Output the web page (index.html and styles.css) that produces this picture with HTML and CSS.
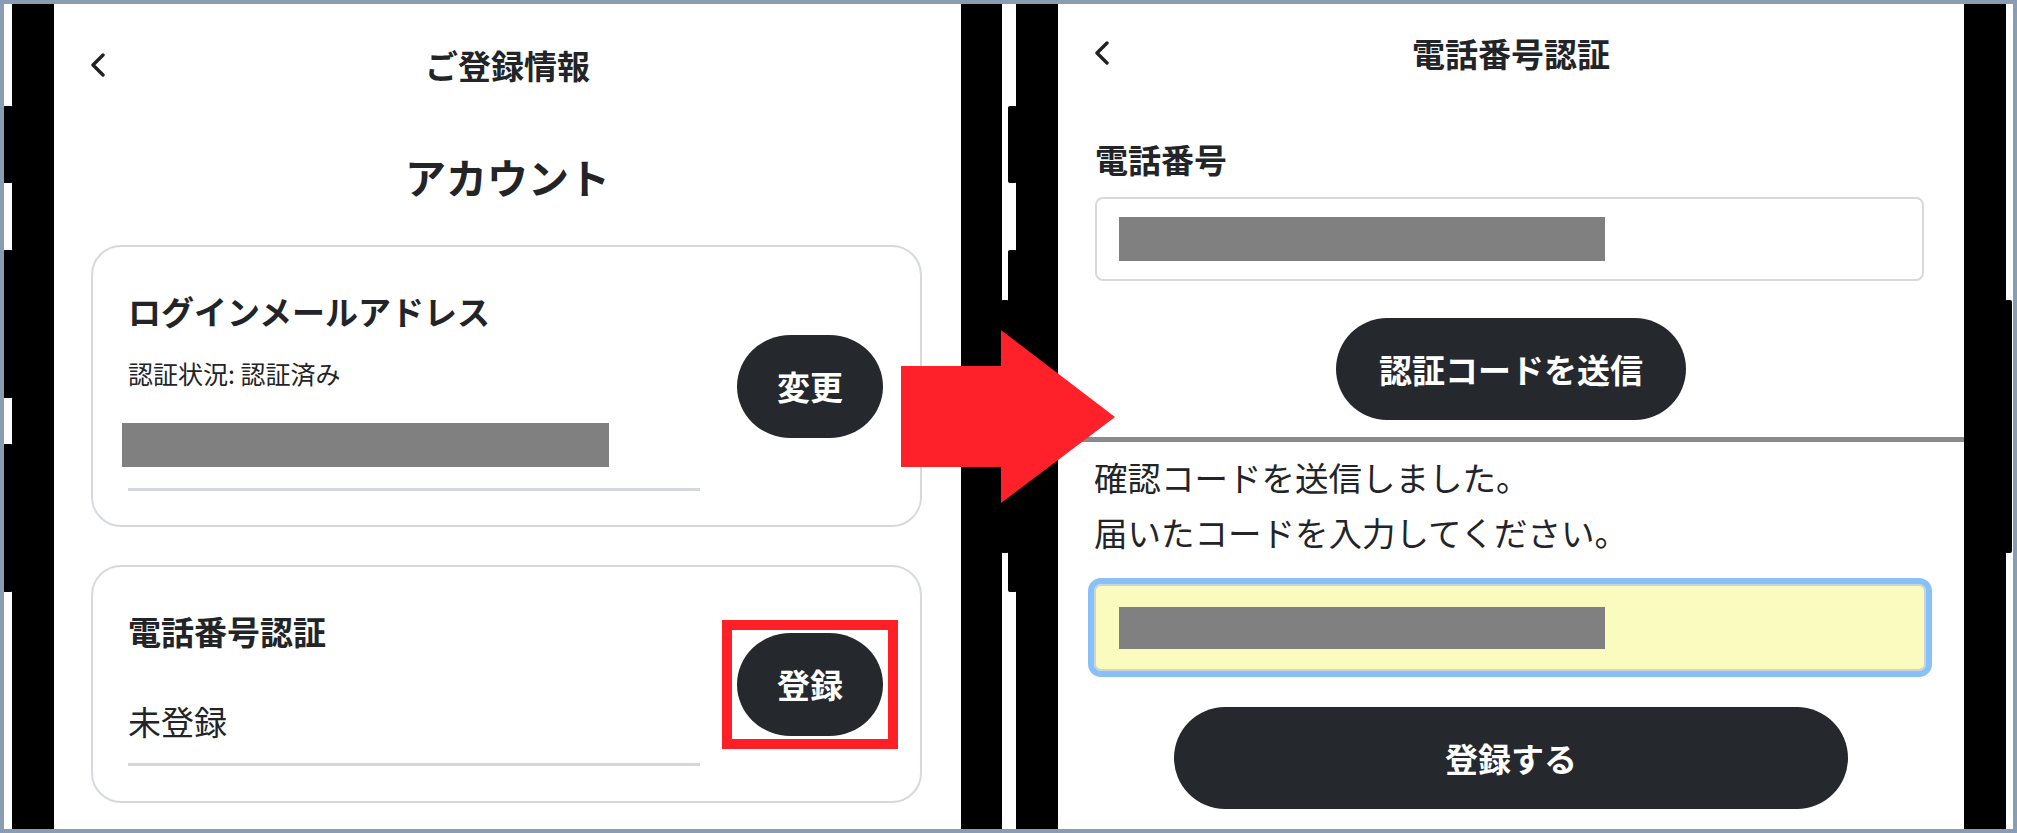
FILE: index.html
```html
<!DOCTYPE html>
<html lang="ja">
<head>
<meta charset="utf-8">
<title>ご登録情報 → 電話番号認証</title>
<link rel="stylesheet" href="styles.css">
</head>
<body>
<div class="frame">
  <div class="phone phone-left">
    <span class="side side-l1"></span>
    <span class="side side-l2"></span>
    <span class="side side-l3"></span>
    <span class="side side-r1"></span>
    <div class="screen">
      <div class="header header-tall">
        <svg class="chev" viewBox="0 0 16 24" width="16" height="24"><polyline points="13,2 3,12 13,22" fill="none" stroke="#222" stroke-width="3.4" stroke-linecap="round" stroke-linejoin="round"/></svg>
        <div class="header-title">ご登録情報</div>
        <span></span>
      </div>
      <div class="section-title">アカウント</div>
      <div class="card card-first">
        <div class="card-main">
          <div class="card-title">ログインメールアドレス</div>
          <div class="card-status">認証状況: 認証済み</div>
          <div class="field field-masked"><span class="mask mask-card"></span></div>
        </div>
        <button class="pill pill-sm">変更</button>
      </div>
      <div class="card card-second">
        <div class="card-main">
          <div class="card-title">電話番号認証</div>
          <div class="field field-value">未登録</div>
        </div>
        <span class="highlight"><button class="pill pill-sm">登録</button></span>
      </div>
    </div>
  </div>
  <div class="phone phone-right">
    <span class="side side-l1 side-gap"></span>
    <span class="side side-lbig side-gap"></span>
    <span class="side side-r1"></span>
    <div class="screen">
      <div class="header header-short">
        <svg class="chev" viewBox="0 0 16 24" width="16" height="24"><polyline points="13,2 3,12 13,22" fill="none" stroke="#222" stroke-width="3.4" stroke-linecap="round" stroke-linejoin="round"/></svg>
        <div class="header-title">電話番号認証</div>
        <span></span>
      </div>
      <div class="form-label">電話番号</div>
      <div class="input-box"><span class="mask mask-input"></span></div>
      <button class="pill pill-send">認証コードを送信</button>
      <div class="splice"></div>
      <div class="notice">
        <p>確認コードを送信しました。</p>
        <p>届いたコードを入力してください。</p>
      </div>
      <div class="input-focus"><span class="mask mask-focus"></span></div>
      <button class="pill pill-wide">登録する</button>
    </div>
  </div>
  <svg class="arrow" viewBox="0 0 214 173" width="214" height="173"><polygon points="0,36 100,36 100,0 214,87 100,173 100,137 0,137" fill="#fe2129"/></svg>
</div>
</body>
</html>
```

FILE: styles.css
```css
* { box-sizing: border-box; }
html, body { margin: 0; padding: 0; background: #ffffff; }
body {
  font-family: "Noto Sans CJK JP", "Noto Sans", sans-serif;
  color: #222428;
}
.frame {
  position: relative;
  width: 2017px;
  height: 833px;
  border: 4px solid #8a9bb4;
  background: #ffffff;
  display: flex;
  padding-left: 8px;
  gap: 14px;
  overflow: hidden;
}
.phone {
  position: relative;
  width: 990px;
  height: 100%;
  border-left: 42px solid #000;
  border-right: 41px solid #000;
}
.phone-right { border-right-width: 42px; }
.side {
  position: absolute;
  background: #000;
  border-radius: 2px;
}
.side-l1 { left: -51px; width: 10px; top: 102px; height: 77px; }
.side-l2 { left: -51px; width: 10px; top: 246px; height: 148px; }
.side-l3 { left: -51px; width: 10px; top: 440px; height: 148px; }
.side-r1 { right: -48px; width: 8px; top: 296px; height: 253px; }
.side-gap { left: -50px; width: 9px; }
.side-lbig { top: 246px; height: 342px; }
.phone-right .side-r1 { right: -48px; width: 7px; }

.screen {
  height: 100%;
  background: #ffffff;
  display: flex;
  flex-direction: column;
}
.header {
  display: grid;
  grid-template-columns: 1fr auto 1fr;
  align-items: center;
  padding: 0 36px;
}
.header-tall { height: 122px; }
.header-short { height: 98px; }
.chev { display: block; }
.header-title {
  font-size: 33px;
  font-weight: 700;
  line-height: 44px;
}
.section-title {
  margin-top: 22px;
  text-align: center;
  font-size: 41px;
  font-weight: 700;
  line-height: 56px;
}
.card {
  margin: 0 39px 0 37px;
  border: 2px solid #d6d9dd;
  border-radius: 30px;
  display: flex;
  align-items: center;
  padding: 0 37px 0 35px;
  gap: 37px;
}
.card-first { margin-top: 41px; }
.card-second { margin-top: 38px; }
.card-main {
  flex: 1;
  padding-top: 42px;
}
.card-first .card-main { padding-bottom: 34px; }
.card-second .card-main { padding-bottom: 35px; }
.card-title {
  font-size: 33px;
  font-weight: 700;
  line-height: 44px;
}
.card-status {
  margin-top: 25px;
  font-size: 25px;
  line-height: 30px;
}
.field { border-bottom: 3px solid #d3d6da; }
.field-masked {
  padding-top: 35px;
  padding-bottom: 21px;
}
.field-value {
  margin-top: 46px;
  font-size: 33px;
  line-height: 44px;
  padding-bottom: 20px;
}
.mask { display: block; background: #808080; }
.mask-card { width: 487px; height: 44px; margin-left: -6px; }

.pill {
  border: none;
  background: #25282d;
  color: #ffffff;
  font-family: "Noto Sans CJK JP", "Noto Sans", sans-serif;
  font-weight: 700;
  font-size: 33px;
  line-height: 44px;
  padding: 0;
  display: flex;
  align-items: center;
  justify-content: center;
}
.pill-sm {
  width: 146px;
  height: 103px;
  border-radius: 56px / 54px;
  flex-shrink: 0;
}
.highlight {
  display: block;
  flex-shrink: 0;
  margin: -13px -15px;
  padding: 3px 5px;
  border: 10px solid #fe1f27;
}

.form-label {
  margin: 35px 0 0 37px;
  font-size: 33px;
  font-weight: 700;
  line-height: 44px;
}
.input-box {
  margin: 16px 40px 0 37px;
  height: 84px;
  border: 2px solid #d6dadd;
  border-radius: 8px;
  display: flex;
  align-items: center;
  padding-left: 22px;
}
.mask-input { width: 486px; height: 44px; }
.pill-send {
  align-self: center;
  margin-top: 37px;
  width: 350px;
  height: 102px;
  border-radius: 51px;
}
.splice {
  margin-top: 17px;
  height: 5px;
  background: #8a8a8a;
}
.notice {
  margin: 7px 0 0 36px;
  font-size: 33.5px;
  line-height: 55px;
}
.notice p { margin: 0; }
.input-focus {
  margin: 19px 32px 0 30px;
  height: 99px;
  border: 6px solid #88c0f8;
  border-radius: 13px;
  background: #fafcbf;
  box-shadow: inset 0 0 0 2px #cdd4d6;
  display: flex;
  align-items: center;
  padding-left: 25px;
}
.mask-focus { width: 486px; height: 42px; }
.pill-wide {
  align-self: center;
  margin-top: 30px;
  width: 674px;
  height: 102px;
  border-radius: 51px;
}

.arrow {
  position: absolute;
  left: 897px;
  top: 326px;
}
```
